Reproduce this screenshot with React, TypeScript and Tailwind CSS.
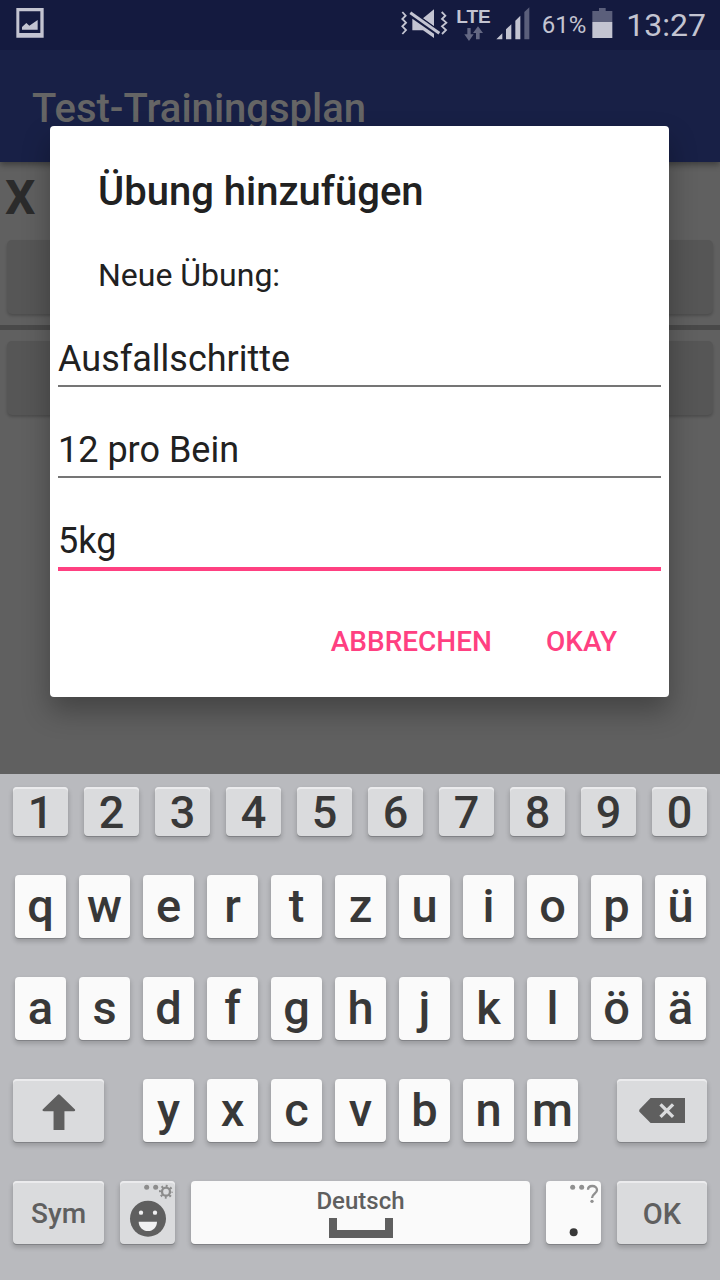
import type { ReactNode } from "react";

const numberKeys = ["1", "2", "3", "4", "5", "6", "7", "8", "9", "0"];
const topKeys = ["q", "w", "e", "r", "t", "z", "u", "i", "o", "p", "ü"];
const homeKeys = ["a", "s", "d", "f", "g", "h", "j", "k", "l", "ö", "ä"];
const bottomKeys = ["y", "x", "c", "v", "b", "n", "m"];

const lightKey =
  "flex h-[63px] min-w-0 items-center justify-center rounded-[4px] bg-[#fafafa] text-[#383838] shadow-[0_1px_0_#818286,0_3px_4px_1px_rgba(0,0,0,0.16)]";
const grayKey =
  "flex min-w-0 items-center justify-center rounded-[4px] bg-[#dadbdd] text-[#5f5f5f] shadow-[0_1px_0_#818286,0_3px_4px_1px_rgba(0,0,0,0.16),inset_0_2px_0_#ebebed]";

function StatusBar() {
  return (
    <div className="flex h-[50px] items-center bg-[#141a3f] pr-[14px] pl-4 text-[#c3c4d1]">
      <svg className="-mt-1 h-[30px] w-[28px]" viewBox="48 24 84 90" aria-hidden="true">
        <path
          fill="currentColor"
          fillRule="evenodd"
          d="M49 24H131V113H49ZM58 34V99H121V34ZM61 37H118V96H61ZM61 37V96H118V37Z"
        />
        <path fill="currentColor" d="M66 89V81L79 69L88 77L113 60V89Z" />
      </svg>
      <div className="ml-auto flex items-center">
        <svg className="-mt-1 h-[31px] w-[47px]" viewBox="35 22 141 93" aria-hidden="true">
          <g fill="none" stroke="currentColor" strokeWidth="5.5">
            <path d="M39 34L49 45L39 55L50 66L39 77L50 88L39 100" />
            <path d="M157 34L168 45L158 55L171 66L158 77L170 88L158 100" />
          </g>
          <path fill="currentColor" d="M134 26V77L101 53ZM69 54L134 99V112L101 89H69Z" />
          <path d="M63 36L150 98" stroke="#141a3f" strokeWidth="16" />
          <path d="M63 36L150 98" stroke="currentColor" strokeWidth="9" />
        </svg>
        <div className="ml-2 flex h-[36px] flex-col items-center">
          <span className="font-['Liberation_Sans',sans-serif] text-[19px] leading-[19px] font-bold">
            LTE
          </span>
          <svg className="h-[15px] w-[20px] text-[#646883]" viewBox="229 76 60 45" aria-hidden="true">
            <path
              fill="currentColor"
              d="M239 82H249V101H258L244 121L230 101H239ZM265 116H276V97H286L271 77L256 97H265Z"
            />
          </svg>
        </div>
        <svg className="-mt-1 ml-[5px] h-[33px] w-[34px]" viewBox="320 20 102 99" aria-hidden="true">
          <path fill="currentColor" d="M321 117L339 99V117ZM350 117V87L366 72V117ZM378 117V61L393 46V117Z" />
          <path fill="#5b5f7b" d="M405 117V35L420 21V117Z" />
        </svg>
        <span className="ml-[12px] text-[24px] leading-[28px]">61%</span>
        <svg className="-mt-1 ml-[6px] h-[30px] w-[21px]" viewBox="608 21 63 90" aria-hidden="true">
          <path fill="#5b5f7b" d="M609 30H629V21H649V30H669V63H609Z" />
          <path fill="currentColor" d="M609 63H669V111H609Z" />
        </svg>
        <span className="ml-[13px] text-[32px] leading-[40px]">13:27</span>
      </div>
    </div>
  );
}

function Workout() {
  return (
    <>
      <header className="relative h-[112px] bg-[#182046] pt-[35px] pl-8 shadow-[0_3px_6px_rgba(0,0,0,0.35)]">
        <h1 className="text-[40px] leading-[48px] font-medium text-[#656565]">Test-Trainingsplan</h1>
      </header>
      <div className="flex flex-col pt-2">
        <span className="pl-[5px] text-[48px] leading-[56px] font-bold text-[#2b2b2b]">X</span>
        <button
          type="button"
          aria-label="Übung 1"
          className="mx-[7px] mt-[14px] h-[74px] rounded-[5px] bg-[#565656] shadow-[0_2px_3px_rgba(0,0,0,0.2)]"
        />
        <hr className="mt-[11px] h-[5px] border-0 bg-[#494949]" />
        <button
          type="button"
          aria-label="Übung 2"
          className="mx-[7px] mt-[11px] h-[74px] rounded-[5px] bg-[#565656] shadow-[0_2px_3px_rgba(0,0,0,0.2)]"
        />
      </div>
    </>
  );
}

function Field({ label, value, active = false }: { label: string; value: string; active?: boolean }) {
  return (
    <input
      type="text"
      aria-label={label}
      defaultValue={value}
      className={
        active
          ? "block w-full border-b-4 border-[#ff4081] pt-[42px] pb-[5px] text-[36px] leading-[42px] outline-none"
          : "block w-full border-b-2 border-[#757575] pt-[42px] pb-[5px] text-[36px] leading-[42px] outline-none"
      }
    />
  );
}

function AddExerciseDialog() {
  return (
    <div
      role="dialog"
      aria-labelledby="dialog-title"
      className="w-full rounded-[4px] bg-white pt-[42px] pb-[19px] text-[#212121] shadow-[0_14px_28px_rgba(0,0,0,0.3)]"
    >
      <h2 id="dialog-title" className="px-12 text-[40px] leading-[48px] font-medium">
        Übung hinzufügen
      </h2>
      <p className="mt-10 px-12 text-[32px] leading-[38px]">Neue Übung:</p>
      <div className="mt-[2px] px-2">
        <Field label="Name" value="Ausfallschritte" />
        <Field label="Wiederholungen" value="12 pro Bein" />
        <Field label="Gewicht" value="5kg" active />
      </div>
      <div className="mt-[35px] flex justify-end gap-[22px] pr-9 text-[28px] font-medium text-[#ff4081]">
        <button type="button" className="h-[72px] px-4">
          ABBRECHEN
        </button>
        <button type="button" className="h-[72px] px-4">
          OKAY
        </button>
      </div>
    </div>
  );
}

function LetterKey({ children }: { children: ReactNode }) {
  return (
    <button type="button" className={`${lightKey} flex-1 pb-[2px] text-[47px] leading-[56px] font-medium`}>
      {children}
    </button>
  );
}

function Keyboard() {
  return (
    <div className="flex flex-col gap-[39px] bg-[#b9babe] pt-[13px] pb-9">
      <div className="flex gap-4 px-[13px]">
        {numberKeys.map((k) => (
          <button
            key={k}
            type="button"
            className={`${grayKey} h-[49px] flex-1 pt-[2px] text-[45px] leading-[47px] font-medium`}
          >
            <span className="text-[#383838]">{k}</span>
          </button>
        ))}
      </div>
      <div className="flex gap-[13px] pr-[14px] pl-[15px]">
        {topKeys.map((k) => (
          <LetterKey key={k}>{k}</LetterKey>
        ))}
      </div>
      <div className="flex gap-[13px] pr-[14px] pl-[15px]">
        {homeKeys.map((k) => (
          <LetterKey key={k}>{k}</LetterKey>
        ))}
      </div>
      <div className="flex gap-[39px] px-[13px]">
        <button type="button" aria-label="Umschalttaste" className={`${grayKey} h-[63px] w-[91px]`}>
          <svg className="mt-[2px] h-[36px] w-[34px]" viewBox="125 101 101 109" aria-hidden="true">
            <path
              fill="currentColor"
              d="M172 103Q175 100 178 103L224 148Q226 153 220 153H192V210H159V153H131Q124 153 126 148Z"
            />
          </svg>
        </button>
        <div className="flex min-w-0 flex-1 gap-[13px]">
          {bottomKeys.map((k) => (
            <LetterKey key={k}>{k}</LetterKey>
          ))}
        </div>
        <button type="button" aria-label="Löschen" className={`${grayKey} h-[63px] w-[90px]`}>
          <svg className="h-[25px] w-[46px]" viewBox="476 114 139 75" aria-hidden="true">
            <path fill="currentColor" d="M511 114H615V189H511L478 156Q475 152 478 148Z" />
            <path d="M541 133L579 171M579 133L541 171" stroke="#dadbdd" strokeWidth="10" />
          </svg>
        </button>
      </div>
      <div className="flex gap-4 px-[13px]">
        <button type="button" className={`${grayKey} h-[63px] w-[91px] pt-[2px] text-[28px] font-medium`}>
          Sym
        </button>
        <button type="button" aria-label="Emoji" className={`${grayKey} h-[63px] w-[55px]`}>
          <svg className="h-[63px] w-[55px]" viewBox="360 364 165 189" aria-hidden="true">
            <g fill="#8c8c8c">
              <circle cx="440" cy="383" r="7.5" />
              <circle cx="467" cy="383" r="7.5" />
            </g>
            <circle cx="498" cy="396" r="12" fill="none" stroke="#8c8c8c" strokeWidth="7" />
            <circle cx="498" cy="396" r="17" fill="none" stroke="#8c8c8c" strokeWidth="8" strokeDasharray="5.5 7.85" strokeDashoffset="2.75" />
            <circle cx="444" cy="477" r="54" fill="currentColor" />
            <g fill="#f0f0f1">
              <circle cx="423" cy="459" r="6.5" />
              <circle cx="465" cy="459" r="6.5" />
              <path d="M416 486H471C471 502 459 514 444 514S416 502 416 486Z" />
            </g>
          </svg>
        </button>
        <button
          type="button"
          className={`${lightKey} flex-1 flex-col text-[24px] leading-[28px] font-medium`}
        >
          <span className="text-[#5f5f5f]">Deutsch</span>
          <svg className="mt-[3px] h-[20px] w-[64px] text-[#5f5f5f]" viewBox="0 0 64 20" aria-hidden="true">
            <path fill="currentColor" d="M0 0H8V12H56V0H64V20H0Z" />
          </svg>
        </button>
        <button type="button" aria-label="Punkt" className={`${lightKey} w-[55px]`}>
          <svg className="h-[63px] w-[55px]" viewBox="198 364 165 189" aria-hidden="true">
            <g fill="#909090">
              <circle cx="278" cy="383" r="7.5" />
              <circle cx="305" cy="383" r="7.5" />
              <circle cx="336" cy="425" r="5" />
            </g>
            <path
              d="M324 390C324 382 329 379 337 379S351 384 351 391C351 401 336 403 336 415"
              fill="none"
              stroke="#909090"
              strokeWidth="7"
            />
            <circle cx="281" cy="518" r="12" fill="currentColor" />
          </svg>
        </button>
        <button type="button" className={`${grayKey} h-[63px] w-[90px] pt-1 text-[29px] font-medium`}>
          OK
        </button>
      </div>
    </div>
  );
}

export default function App() {
  return (
    <div className="flex min-h-screen flex-col bg-[#606060] font-[Roboto,sans-serif]">
      <StatusBar />
      <main className="relative flex-1 overflow-hidden">
        <Workout />
        <div className="absolute inset-0 flex items-center pr-[51px] pb-[2px] pl-[50px]">
          <AddExerciseDialog />
        </div>
      </main>
      <Keyboard />
    </div>
  );
}
